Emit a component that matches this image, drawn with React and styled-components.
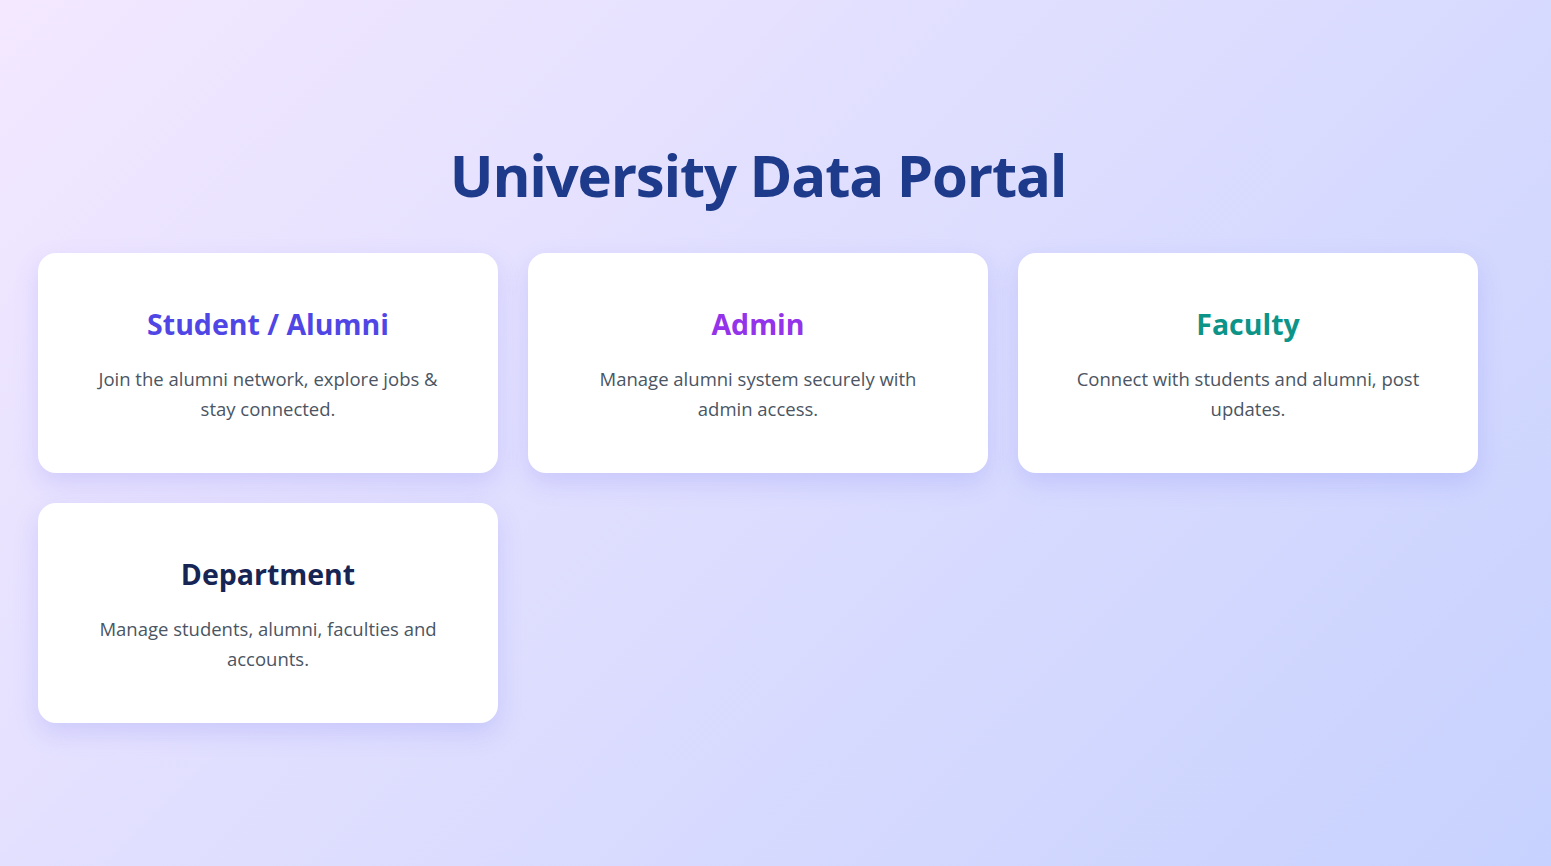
import React from 'react'
import styled, { createGlobalStyle } from 'styled-components'

const GlobalStyle = createGlobalStyle`
  * { box-sizing: border-box; }
  html, body {
    margin: 0;
    padding: 0;
  }
  body {
    font-family: "Open Sans", "Noto Sans", "Liberation Sans", sans-serif;
    background: linear-gradient(135deg, #f3e8ff 0%, #c7d2fe 100%);
    min-height: 100vh;
  }
`

const Page = styled.div`
  min-height: 100vh;
  width: 1516px;
  padding: 139px 38px 60px;
`

const Heading = styled.h1`
  margin: 0 0 42px;
  text-align: center;
  font-size: 58px;
  font-weight: 700;
  letter-spacing: -1.2px;
  line-height: 72px;
  color: #1e3a8a;
`

const Grid = styled.div`
  display: grid;
  grid-template-columns: repeat(3, 460px);
  gap: 30px;
`

const Card = styled.div`
  height: 220px;
  background: #ffffff;
  border-radius: 18px;
  box-shadow: 0 10px 25px rgba(99, 102, 241, 0.18);
  display: flex;
  flex-direction: column;
  align-items: center;
  padding: 50px 54px 0;
  text-align: center;
  cursor: pointer;
`

const CardTitle = styled.h2`
  margin: 0 0 19px;
  font-size: 28.5px;
  font-weight: 700;
  line-height: 42px;
  color: ${props => props.color};
`

const CardText = styled.p`
  margin: 0;
  font-size: 18.5px;
  line-height: 30px;
  color: #4b5563;
`

const roles = [
  { title: 'Student / Alumni', color: '#4f46e5', text: 'Join the alumni network, explore jobs & stay connected.' },
  { title: 'Admin', color: '#9333ea', text: 'Manage alumni system securely with admin access.' },
  { title: 'Faculty', color: '#0d9488', text: 'Connect with students and alumni, post updates.' },
  { title: 'Department', color: '#172554', text: 'Manage students, alumni, faculties and accounts.' },
]

export default function App() {
  return (
    <>
      <GlobalStyle />
      <Page>
        <Heading>University Data Portal</Heading>
        <Grid>
          {roles.map(role => (
            <Card key={role.title}>
              <CardTitle color={role.color}>{role.title}</CardTitle>
              <CardText>{role.text}</CardText>
            </Card>
          ))}
        </Grid>
      </Page>
    </>
  )
}
